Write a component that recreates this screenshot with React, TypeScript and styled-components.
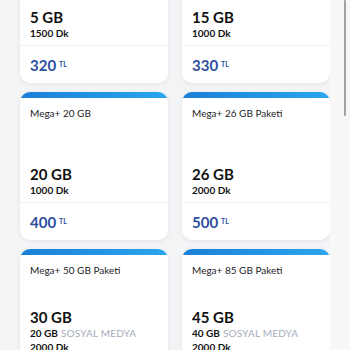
import React from "react";
import styled, { createGlobalStyle } from "styled-components";

const GlobalStyle = createGlobalStyle`
  html, body {
    margin: 0;
    padding: 0;
    background: #f3f4f6;
    overflow: hidden;
    font-family: Lato, "Noto Sans", sans-serif;
  }
`;

const Page = styled.div`
  display: flex;
  width: 350px;
  height: 350px;
  overflow: hidden;
`;

const Main = styled.div`
  width: 330px;
  box-sizing: border-box;
  padding-left: 20px;
`;

const Grid = styled.div`
  display: grid;
  grid-template-columns: 148px 148px;
  column-gap: 14px;
  row-gap: 9px;
  margin-top: -65px;
`;

const Gutter = styled.div`
  width: 20px;
  background: #f7f7f8;
  flex-shrink: 0;
`;

const Thumb = styled.div`
  width: 2px;
  height: 116px;
  margin-left: 14px;
  background: #a2a2a4;
  border-radius: 1px;
`;

const Card = styled.div`
  background: #ffffff;
  border-radius: 10px;
  height: 148px;
  display: flex;
  flex-direction: column;
  overflow: hidden;
  box-shadow: 0 1px 4px rgba(20, 30, 60, 0.07);
`;

const TopBar = styled.div`
  height: 6px;
  background: linear-gradient(90deg, #1b80d8, #2aa6ee);
  flex-shrink: 0;
`;

const Title = styled.div`
  padding: 9px 10px 0;
  font-size: 10px;
  line-height: 12px;
  color: #1c1c1e;
`;

const Body = styled.div`
  margin-top: auto;
  padding: 0 10px 5px;
`;

const Big = styled.div`
  font-size: 15px;
  line-height: 18px;
  font-weight: 700;
  color: #111;
`;

const Line = styled.div`
  font-size: 10px;
  line-height: 14px;
  font-weight: 700;
  color: #111;
`;

const Muted = styled.span`
  font-weight: 400;
  color: #a3abbd;
  margin-left: 3px;
  letter-spacing: 0.2px;
`;

const PriceRow = styled.div`
  height: 37px;
  border-top: 1px solid #efeff1;
  padding: 0 10px;
  display: flex;
  align-items: center;
  flex-shrink: 0;
`;

const Price = styled.span`
  font-size: 15px;
  font-weight: 700;
  color: #2d4f9f;
`;

const Currency = styled.sup`
  font-size: 7px;
  font-weight: 700;
  color: #2d4f9f;
  margin-left: 3px;
  position: relative;
  top: -1px;
`;

type Pack = {
  title: string;
  gb: string;
  social?: string;
  dk: string;
  price: string;
};

const packs: Pack[] = [
  { title: "Mega+ 5 GB", gb: "5 GB", dk: "1500 Dk", price: "320" },
  { title: "Mega+ 15 GB Paketi", gb: "15 GB", dk: "1000 Dk", price: "330" },
  { title: "Mega+ 20 GB", gb: "20 GB", dk: "1000 Dk", price: "400" },
  { title: "Mega+ 26 GB Paketi", gb: "26 GB", dk: "2000 Dk", price: "500" },
  { title: "Mega+ 50 GB Paketi", gb: "30 GB", social: "20 GB", dk: "2000 Dk", price: "600" },
  { title: "Mega+ 85 GB Paketi", gb: "45 GB", social: "40 GB", dk: "2000 Dk", price: "700" },
];

export default function App() {
  return (
    <>
      <GlobalStyle />
      <Page>
        <Main>
          <Grid>
            {packs.map((p) => (
              <Card key={p.title}>
                <TopBar />
                <Title>{p.title}</Title>
                <Body>
                  <Big>{p.gb}</Big>
                  {p.social && (
                    <Line>
                      {p.social}
                      <Muted>SOSYAL MEDYA</Muted>
                    </Line>
                  )}
                  <Line>{p.dk}</Line>
                </Body>
                <PriceRow>
                  <Price>{p.price}</Price>
                  <Currency>TL</Currency>
                </PriceRow>
              </Card>
            ))}
          </Grid>
        </Main>
        <Gutter>
          <Thumb />
        </Gutter>
      </Page>
    </>
  );
}
